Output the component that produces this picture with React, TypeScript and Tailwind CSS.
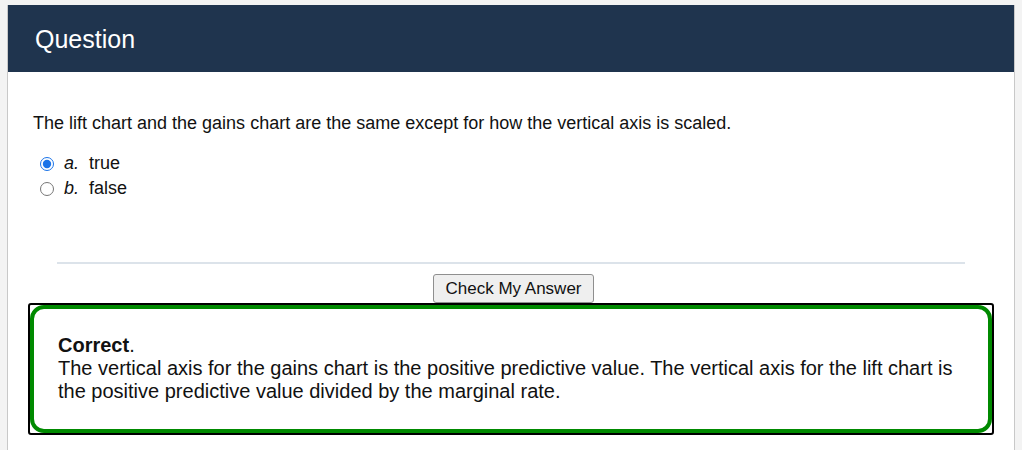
export default function App() {
  return (
    <div className="min-h-[450px] bg-[#f3f3f3] pt-[5px] pl-[7px] pr-[7px] font-['Liberation_Sans',Arial,sans-serif] text-[#111]">
      <div className="border-x border-[#c8c8c8] bg-white min-h-[445px]">
        {/* Header */}
        <div className="h-[67px] bg-[#1f344e] flex items-center px-[27px]">
          <h1 className="text-white text-[25px] leading-none pt-[2px]">Question</h1>
        </div>

        {/* Body */}
        <div className="pt-[39px] px-[25px]">
          <p className="text-[18px] leading-[24px]">
            The lift chart and the gains chart are the same except for how the vertical axis is scaled.
          </p>

          <div className="mt-[16px] flex flex-col">
            <label className="flex items-center h-[25px] text-[18px]">
              <input type="radio" name="q" defaultChecked className="w-[14px] h-[14px] ml-[7px] mr-[10px] accent-[#1a73e8]" />
              <span className="italic w-[25px]">a.</span>
              <span>true</span>
            </label>
            <label className="flex items-center h-[25px] text-[18px]">
              <input type="radio" name="q" className="w-[14px] h-[14px] ml-[7px] mr-[10px]" />
              <span className="italic w-[25px]">b.</span>
              <span>false</span>
            </label>
          </div>

          <div className="mt-[61px] mx-[24px] h-[2px] bg-[#dce3ea]" />

          <div className="mt-[10px] flex justify-center pl-[5px]">
            <button className="h-[29px] w-[161px] text-[17px] text-[#111] bg-[#efefef] border border-[#8f8f8f] rounded-[3px]">
              Check My Answer
            </button>
          </div>

          <div className="-mx-[5px] border-2 border-black rounded-[3px]">
            <div className="border-4 border-[#008a00] rounded-[14px] pt-[25px] pb-[26px] pl-[24px] pr-[20px] text-[20px] leading-[23px]">
              <p>
                <span className="font-bold">Correct</span>.
              </p>
              <p>
                The vertical axis for the gains chart is the positive predictive value. The vertical axis for the lift chart is the positive predictive value divided by the marginal rate.
              </p>
            </div>
          </div>
        </div>
      </div>
    </div>
  );
}
